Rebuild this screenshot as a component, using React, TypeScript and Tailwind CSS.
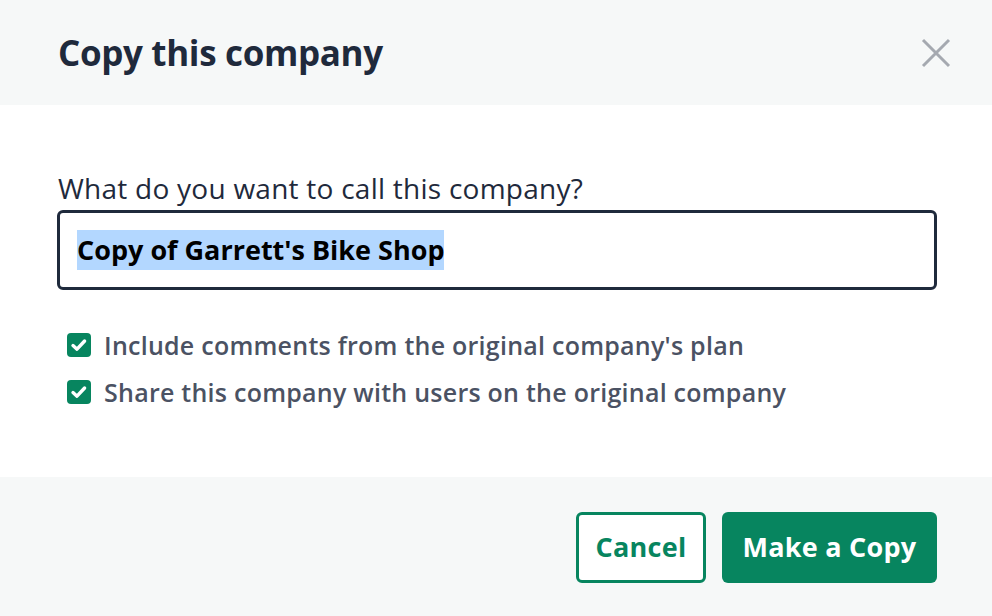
import React from "react";

function Check() {
  return (
    <span className="flex h-[24px] w-[24px] shrink-0 items-center justify-center rounded-[4px] bg-[#07855f]">
      <svg width="24" height="24" viewBox="0 0 24 24" fill="none">
        <path d="M6 12.6 L10 16.2 L17.6 8" stroke="white" strokeWidth="3.4" strokeLinecap="round" strokeLinejoin="round" />
      </svg>
    </span>
  );
}

export default function App() {
  return (
    <div className="flex h-[616px] w-[992px] flex-col bg-white text-[#1f2a3c]" style={{ fontFamily: "'Open Sans', sans-serif" }}>
      <div className="flex h-[105px] shrink-0 items-center justify-between bg-[#f6f8f8] pl-[58px] pr-[40px]">
        <h1 className="text-[35px] font-bold leading-none tracking-[-0.35px]">Copy this company</h1>
        <svg width="32" height="32" viewBox="0 0 32 32">
          <path d="M3 3 L29 29 M29 3 L3 29" stroke="#a5a9b0" strokeWidth="3" />
        </svg>
      </div>
      <div className="flex flex-1 flex-col pl-[57px] pr-[55px] pt-[66px]">
        <label className="pl-[1px] text-[28px] leading-[34px] tracking-[0.25px]">What do you want to call this company?</label>
        <div className="mt-[5px] flex h-[80px] items-center rounded-[6px] border-[3px] border-[#1f2a3c] px-[17px]">
          <span className="bg-[#b3d7ff] text-[27px] font-bold leading-[40px] text-black">Copy of Garrett's Bike Shop</span>
        </div>
        <div className="mt-[43px] flex flex-col gap-[23px] pl-[10px] text-[25px] font-semibold tracking-[0.25px] text-[#4b5263]">
          <div className="flex items-center gap-[13px]">
            <Check />
            <span className="leading-[24px]">Include comments from the original company's plan</span>
          </div>
          <div className="flex items-center gap-[13px]">
            <Check />
            <span className="leading-[24px]">Share this company with users on the original company</span>
          </div>
        </div>
      </div>
      <div className="flex h-[139px] shrink-0 items-center justify-end gap-[16px] bg-[#f6f8f8] pr-[55px] pt-[2px]">
        <button className="h-[71px] w-[130px] rounded-[6px] border-[3px] border-[#07855f] bg-white text-[27px] font-bold tracking-[0.25px] text-[#07855f]">Cancel</button>
        <button className="h-[71px] w-[215px] rounded-[6px] bg-[#07855f] text-[27px] font-bold tracking-[0.25px] text-white">Make a Copy</button>
      </div>
    </div>
  );
}
